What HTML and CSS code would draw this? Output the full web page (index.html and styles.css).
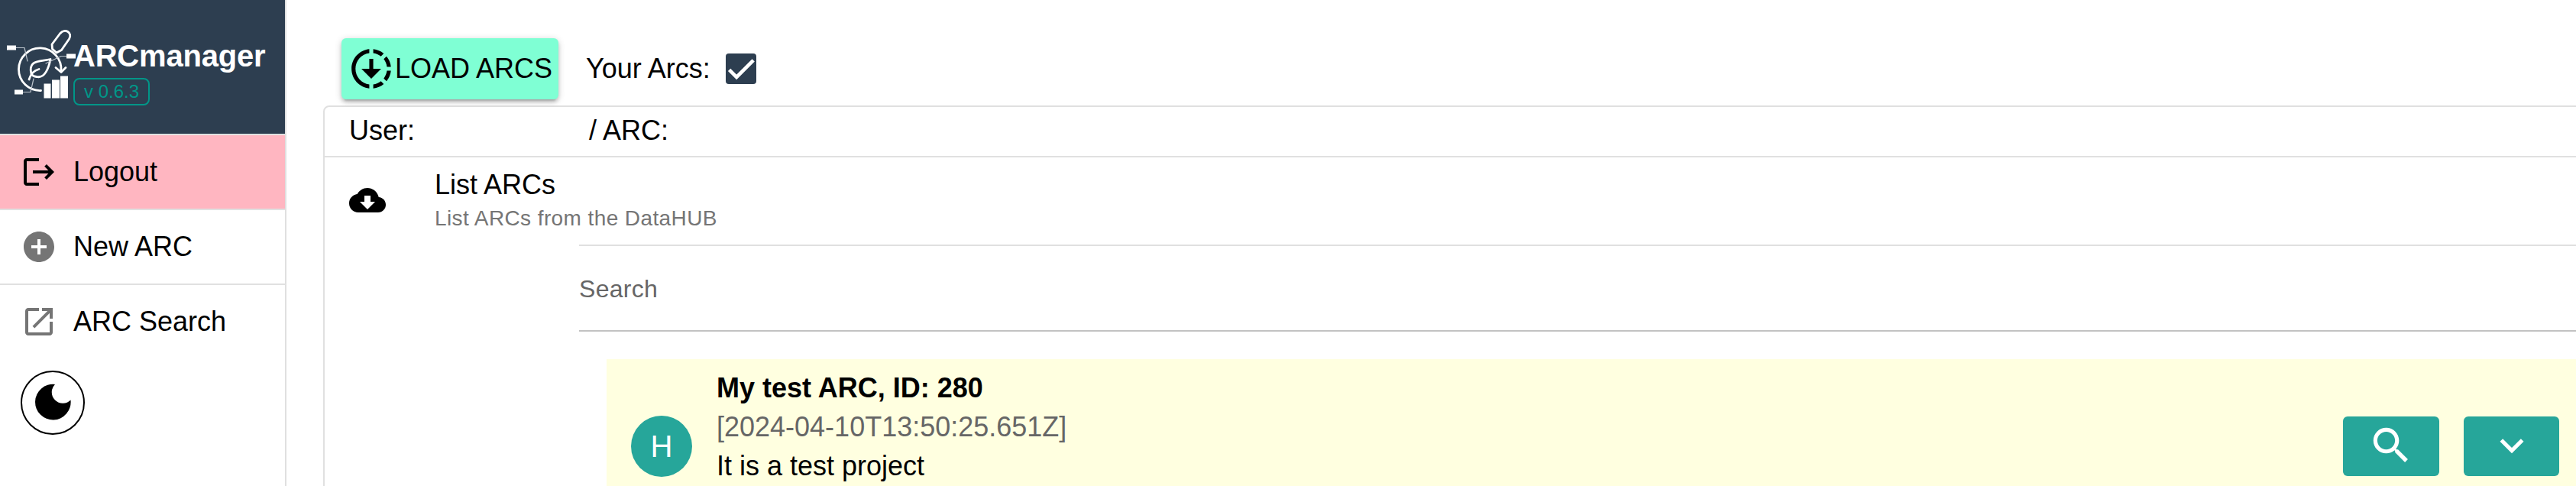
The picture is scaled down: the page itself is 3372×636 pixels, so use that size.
FILE: index.html
```html
<!DOCTYPE html>
<html lang="en">
<head>
<meta charset="utf-8">
<title>ARCmanager</title>
<link rel="stylesheet" href="styles.css">
</head>
<body>
<div class="app">
  <aside class="sidebar">
    <header class="brand">
      <svg class="logo" viewBox="0 0 100 100" fill="none" stroke="#fff" stroke-linecap="round" stroke-linejoin="round">
        <path d="M53.5 83.5A27.8 27.8 0 1 1 80 58" stroke-width="2.8"/>
        <path d="M73 53.5L80 59.500L86 53.500" stroke-width="2.8"/>
        <path d="M68.500 29L68 23L78.500 9C85 1 95.500 8 90.500 16L80.500 30.500L74 34Z" stroke-width="2.8"/>
        <path d="M38 69C40 62 45 57 51 55.500M41 62C36 42 54 46 66 42.500C64 53 59 68 48 65.500Q43 65 41 62" stroke-width="2.8"/>
        <path d="M20 27.500H32L36 45M30 85.500H40L44 68M60 48L80 38.500H88" stroke-width="1.200" stroke="#bcc4cc"/>
        <path d="M9 24.500h12v6H9zM19 82.500h11v6H19zM87 35.500h12v6H87zM57.500 74.500h9v19h-9zM68 69.500h10v24H68zM79 64.500h10v29H79z" fill="#fff" stroke="none"/>
      </svg>
      <div class="brand-text">
        <div class="brand-name">ARCmanager</div>
        <div class="version">v 0.6.3</div>
      </div>
    </header>
    <nav class="menu">
      <a class="menu-item logout">
        <svg class="icon" viewBox="0 0 24 24"><path d="M17 7l-1.410 1.410L18.170 11H8v2h10.170l-2.580 2.580L17 17l5-5zM4 5h8V3H4c-1.100 0-2 .9-2 2v14c0 1.100.9 2 2 2h8v-2H4V5z"/></svg>
        <span>Logout</span>
      </a>
      <a class="menu-item">
        <svg class="icon grey" viewBox="0 0 24 24"><path d="M12 2C6.480 2 2 6.480 2 12s4.480 10 10 10 10-4.480 10-10S17.520 2 12 2zm5 11h-4v4h-2v-4H7v-2h4V7h2v4h4v2z"/></svg>
        <span>New ARC</span>
      </a>
      <a class="menu-item">
        <svg class="icon grey" viewBox="0 0 24 24"><path d="M19 19H5V5h7V3H5c-1.110 0-2 .9-2 2v14c0 1.100.89 2 2 2h14c1.100 0 2-.9 2-2v-7h-2v7zM14 3v2h3.590l-9.830 9.830 1.410 1.410L19 6.410V10h2V3h-7z"/></svg>
        <span>ARC Search</span>
      </a>
    </nav>
    <button class="theme-toggle" aria-label="Dark mode">
      <svg viewBox="0 0 84 84"><path d="M45 18A23.300 23.300 0 1 0 65.500 38.500A14.200 14.200 0 0 1 45 18Z"/></svg>
    </button>
  </aside>
  <main class="content">
    <div class="toolbar">
      <button class="load">
        <svg viewBox="0 0 24 24"><path d="M18.320 4.260C16.840 3.050 15.010 2.250 13 2.050v2.020c1.460.18 2.790.76 3.900 1.620l1.420-1.430zM19.930 11h2.020c-.2-2.010-1-3.840-2.210-5.320L18.310 7.100c.86 1.110 1.440 2.440 1.620 3.900zM18.310 16.900l1.430 1.430c1.210-1.480 2.010-3.320 2.210-5.320h-2.020c-.18 1.450-.76 2.780-1.620 3.890zM13 19.930v2.020c2.010-.2 3.840-1 5.320-2.210l-1.430-1.430c-1.100.86-2.430 1.440-3.890 1.620zM13 12V7h-2v5H7l5 5 5-5h-4zM11 19.930v2.020c-5.050-.5-9-4.760-9-9.950s3.950-9.450 9-9.950v2.020C7.050 4.560 4 7.920 4 12s3.050 7.440 7 7.930z"/></svg>
        <span>LOAD ARCS</span>
      </button>
      <label class="own">
        <span>Your Arcs:</span>
        <span class="checkbox"><svg viewBox="0 0 24 24"><path d="M1.730 12.910L8.100 19.280L22.790 4.590"/></svg></span>
      </label>
    </div>
    <section class="panel">
      <div class="crumb"><span class="user">User:</span><span>/ ARC:</span></div>
      <div class="list-head">
        <svg class="icon" viewBox="0 0 24 24"><path d="M19.350 10.040C18.670 6.590 15.640 4 12 4 9.110 4 6.600 5.640 5.350 8.040 2.340 8.360 0 10.910 0 14c0 3.310 2.690 6 6 6h13c2.760 0 5-2.240 5-5 0-2.640-2.050-4.780-4.650-4.960zM17 13l-5 5-5-5h3V9h4v4h3z"/></svg>
        <div class="list-text">
          <div class="list-title">List ARCs</div>
          <div class="caption">List ARCs from the DataHUB</div>
        </div>
      </div>
      <div class="list-body">
        <div class="search">Search</div>
        <article class="arc">
          <div class="avatar">H</div>
          <div class="arc-text">
            <div class="arc-name">My test ARC, ID: 280</div>
            <div class="arc-date">[2024-04-10T13:50:25.651Z]</div>
            <div>It is a test project</div>
          </div>
          <div class="actions">
            <button class="action" aria-label="Search"><svg viewBox="0 0 24 24"><path d="M15.500 14h-.79l-.28-.27C15.410 12.590 16 11.110 16 9.500 16 5.910 13.090 3 9.500 3S3 5.910 3 9.500 5.910 16 9.500 16c1.610 0 3.090-.59 4.230-1.570l.27.28v.79l5 4.990L20.490 19l-4.990-5zm-6 0C7.010 14 5 11.990 5 9.500S7.010 5 9.500 5 14 7.010 14 9.500 11.990 14 9.500 14z"/></svg></button>
            <button class="action expand" aria-label="Expand"><svg viewBox="0 0 24 24"><path d="M7.410 8.590L12 13.170l4.590-4.580L18 10l-6 6-6-6 1.410-1.410z"/></svg></button>
          </div>
        </article>
      </div>
    </section>
  </main>
</div>
</body>
</html>
```
FILE: styles.css
```css
* { box-sizing: border-box; }
body { margin: 0; background: #fff; color: #000; font: 36px/48px "Liberation Sans", Arial, sans-serif; overflow: hidden; }
button { border: 0; padding: 0; margin: 0; font: inherit; color: inherit; }
svg { display: block; flex: none; }
.app { display: flex; width: 3372px; height: 636px; overflow: hidden; }

.sidebar { flex: none; width: 375px; border-right: 2px solid #e0e0e0; }
.brand { display: flex; height: 177px; background: #2d3e50; border-bottom: 2px solid #e0e0e0; }
.logo { width: 100px; height: 100px; margin: 35px -4px 0 0; overflow: visible; }
.brand-text { padding-top: 49px; }
.brand-name { color: #fff; font-weight: 700; font-size: 40px; line-height: 48px; letter-spacing: -.2px; }
.version { width: 100px; height: 36px; margin-top: 5px; border: 2px solid #009688; border-radius: 8px; color: #009688; font-size: 24px; line-height: 32px; text-align: center; }
.menu-item { display: flex; align-items: center; gap: 20px; height: 98px; padding-left: 27px; border-bottom: 2px solid #e0e0e0; }
.menu-item span { padding-left: 1px; }
.menu-item:last-child { border-bottom: 0; height: 96px; }
.logout { background: #ffb6c1; }
.icon { width: 48px; height: 48px; }
.grey { fill: #757575; }
.theme-toggle { display: block; width: 84px; height: 84px; margin: 16px 0 0 27px; border: 2px solid #000; border-radius: 50%; background: #fff; }
.theme-toggle svg { width: 84px; height: 84px; margin: -2px; }

.content { flex: none; width: 3100px; padding: 50px 0 0 48px; }
.toolbar { display: flex; align-items: center; height: 80px; padding-left: 24px; }
.load { display: flex; align-items: center; width: 284px; height: 80px; padding-left: 8px; border-radius: 6px; background: #7fffd4; box-shadow: 0 2px 10px rgba(0,0,0,.2), 0 4px 4px rgba(0,0,0,.14), 0 6px 2px -4px rgba(0,0,0,.12); }
.load svg { width: 62px; height: 62px; }
.load span { white-space: nowrap; }
.own { display: flex; align-items: center; gap: 20px; margin-left: 36px; }
.checkbox { width: 40px; height: 40px; padding: 2px; border-radius: 4px; background: #2d3e50; }
.checkbox svg { width: 36px; height: 36px; fill: none; stroke: #fff; stroke-width: 3.12px; }

.panel { margin-top: 8px; height: 700px; border: 2px solid #e0e0e0; border-radius: 8px; }
.crumb { display: flex; height: 66px; padding: 7px 0 0 32px; border-bottom: 2px solid #e0e0e0; }
.user { width: 314px; }
.list-head { display: flex; align-items: center; gap: 64px; height: 114px; padding: 0 0 2px 32px; }
.list-text { padding-top: 2px; }
.list-title { line-height: 44px; }
.caption { padding-top: 2px; color: #757575; font-size: 28px; line-height: 40px; letter-spacing: .4px; }
.list-body { margin-left: 333px; border-top: 2px solid #e0e0e0; }
.search { height: 112px; padding-top: 32px; border-bottom: 2px solid #c2c2c2; color: #666; font-size: 32px; letter-spacing: .3px; }
.arc { display: flex; height: 230px; width: 2592px; margin: 36px 0 0 36px; padding-left: 32px; background: #ffffe0; }
.avatar { flex: none; width: 80px; height: 80px; margin-top: 74px; border-radius: 50%; background: #26a69a; color: #fff; font-size: 40px; line-height: 80px; text-align: center; }
.arc-text { flex: 1; margin-left: 32px; padding-top: 12px; line-height: 51px; }
.arc-name { font-weight: 700; }
.arc-date { color: #666; }
.actions { display: flex; gap: 32px; padding: 75px 36px 0 0; }
.action { display: flex; align-items: center; justify-content: center; width: 126px; height: 78px; border-radius: 6px; background: #26a69a; }
.expand { width: 125px; }
.action svg { width: 62px; height: 62px; margin-bottom: 2px; fill: #fff; }
```
